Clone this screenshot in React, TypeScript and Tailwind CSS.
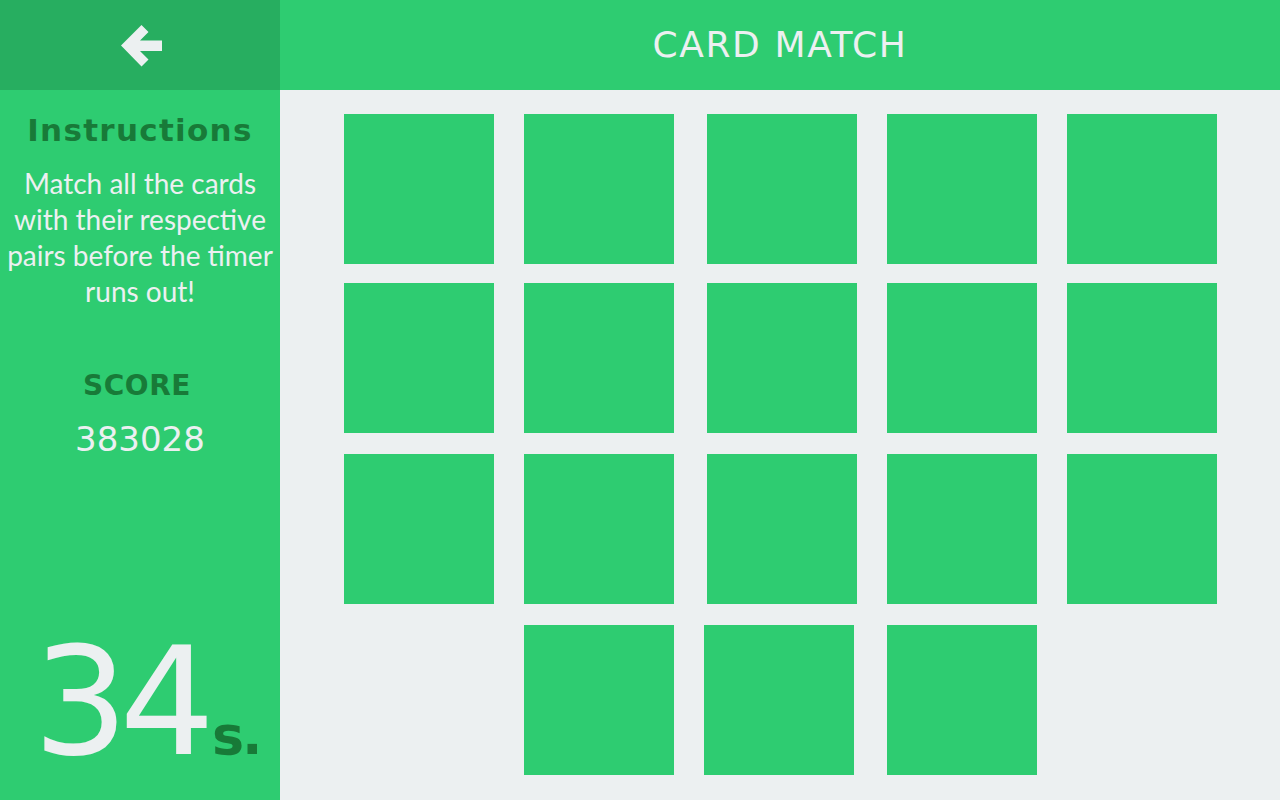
import React from "react";

const head = { fontFamily: '"DejaVu Sans", "Liberation Sans", sans-serif' };
const body = { fontFamily: 'Lato, "Open Sans", sans-serif' };

function BackArrow() {
  return (
    <svg width="43" height="43" viewBox="0 0 43 43" aria-hidden="true">
      <polygon
        points="1,21.5 21.5,1 28.5,8 20,16.5 42,16.5 42,27 20,27 28.5,35.5 21.5,42.5"
        fill="#ecf0f1"
      />
    </svg>
  );
}

function Card({ ml }: { ml: string }) {
  return <div className={`w-[150px] h-[150px] bg-[#2ecc71] shrink-0 ${ml}`} />;
}

export default function App() {
  return (
    <div className="w-[1280px] h-[800px] flex flex-col overflow-hidden bg-[#ecf0f1]">
      <div className="flex h-[90px] shrink-0">
        <div className="w-[280px] h-full bg-[#27ae60] flex items-center justify-center pl-[3px]">
          <BackArrow />
        </div>
        <div className="flex-1 h-full bg-[#2ecc71] flex items-center justify-center">
          <h1 className="text-[36px] text-[#ecf0f1] tracking-[1.6px]" style={head}>
            CARD MATCH
          </h1>
        </div>
      </div>
      <div className="flex flex-1">
        <aside className="w-[280px] bg-[#2ecc71] flex flex-col items-center pt-[18px]">
          <h2 className="text-[31px] leading-[44px] font-bold text-[#187a38] tracking-[1.3px]" style={head}>
            Instructions
          </h2>
          <p className="text-[28px] leading-[36px] text-[#ecf0f1] text-center mt-[13px] whitespace-nowrap" style={body}>
            <span className="block">Match all the cards</span>
            <span className="block">with their respective</span>
            <span className="block">pairs before the timer</span>
            <span className="block">runs out!</span>
          </p>
          <div className="mt-[60px] text-[28px] leading-[34px] font-bold text-[#187a38] tracking-[0.6px] -ml-[6px]" style={head}>
            SCORE
          </div>
          <div className="mt-[16px] text-[34px] leading-[40px] text-[#ecf0f1]" style={head}>
            383028
          </div>
          <div className="mt-auto mb-[23px] flex items-baseline self-start ml-[33px]">
            <span className="text-[150px] leading-[150px] text-[#ecf0f1] tracking-[-9px]" style={head}>
              34
            </span>
            <span className="text-[54px] leading-[60px] text-[#187a38] font-bold ml-[6px] tracking-[-2px]" style={head}>
              s.
            </span>
          </div>
        </aside>
        <main className="flex-1 flex flex-col pt-[24px]">
          <div className="flex">
            <Card ml="ml-[64px]" />
            <Card ml="ml-[30px]" />
            <Card ml="ml-[33px]" />
            <Card ml="ml-[30px]" />
            <Card ml="ml-[30px]" />
          </div>
          <div className="flex mt-[19px]">
            <Card ml="ml-[64px]" />
            <Card ml="ml-[30px]" />
            <Card ml="ml-[33px]" />
            <Card ml="ml-[30px]" />
            <Card ml="ml-[30px]" />
          </div>
          <div className="flex mt-[21px]">
            <Card ml="ml-[64px]" />
            <Card ml="ml-[30px]" />
            <Card ml="ml-[33px]" />
            <Card ml="ml-[30px]" />
            <Card ml="ml-[30px]" />
          </div>
          <div className="flex mt-[21px]">
            <Card ml="ml-[244px]" />
            <Card ml="ml-[30px]" />
            <Card ml="ml-[33px]" />
          </div>
        </main>
      </div>
    </div>
  );
}
